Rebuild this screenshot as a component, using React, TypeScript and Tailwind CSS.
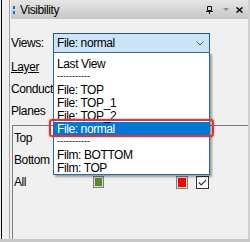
const items = [
  'Last View',
  '-----------',
  'File: TOP',
  'File: TOP_1',
  'File: TOP_2',
  'File: normal',
  '-----------',
  'Film: BOTTOM',
  'Film: TOP',
];

const PinIcon = () => (
  <svg width="7" height="8" viewBox="0 0 7 8" className="block">
    <path d="M1.5 0.5h4v4h-4z M0 5.5h7 M3.5 5.5v2.5" stroke="#111" strokeWidth="1" fill="none" />
  </svg>
);

const CloseIcon = () => (
  <svg width="7" height="6" viewBox="0 0 7 6" className="block">
    <path d="M0.5 0.5l6 5 M6.5 0.5l-6 5" stroke="#111" strokeWidth="1.6" fill="none" />
  </svg>
);

export default function App() {
  return (
    <div className="relative w-[250px] h-[242px] overflow-hidden bg-[#f0f0f0] flex flex-col font-['Liberation_Sans',Arial,sans-serif] text-[11px] text-black">
      <div className="flex flex-1">
        {/* left gutter */}
        <div className="flex w-[11px] shrink-0">
          <div className="w-px" />
          <div className="w-px bg-black" />
          <div className="w-[7px]" />
          <div className="w-px bg-[#a0a0a0]" />
          <div className="w-px" />
        </div>

        {/* panel */}
        <div className="flex flex-1 flex-col">
          <div className="flex h-[19px] items-center bg-gradient-to-b from-[#e6e6e6] to-[#c6c6c6]">
            <div className="ml-[2px] flex flex-col gap-[2px]">
              <div className="h-[3px] w-[2px] bg-[#1f6fd1]" />
              <div className="h-[3px] w-[2px] bg-[#1f6fd1]" />
            </div>
            <span className="ml-[5px] text-[12px] tracking-[-0.4px]">Visibility</span>
            <div className="ml-auto flex items-center">
              <PinIcon />
              <div className="ml-[10px] h-0 w-0 border-x-[3px] border-t-[3px] border-x-transparent border-t-[#8c8c8c]" />
              <div className="ml-[7px] mr-[5px]">
                <CloseIcon />
              </div>
            </div>
          </div>

          <div className="mt-[14px] flex h-[20px] items-center">
            <span className="w-[42px] text-[12px] tracking-[-0.4px]">Views:</span>
            <div className="flex h-[20px] w-[157px] items-center border border-[#1f5a93] bg-[#cce4f7] pl-[3px] pr-[5px] text-[12px] tracking-[-0.4px]">
              <span>File: normal</span>
              <svg width="8" height="5" viewBox="0 0 8 5" className="ml-auto">
                <path d="M0.5 0.5l3.5 3.5 3.5-3.5" stroke="#606060" strokeWidth="1" fill="none" />
              </svg>
            </div>
          </div>

          <div className="mt-[3px] flex flex-col text-[12px] tracking-[-0.4px]">
            <div className="flex h-[22px] items-center">
              <span className="underline">Layer</span>
            </div>
            <div className="flex h-[22px] w-[42px] items-center overflow-hidden whitespace-nowrap">Conductors</div>
            <div className="flex h-[22px] items-center">Planes</div>
          </div>

          <div className="ml-px mt-[3px] flex flex-1 flex-col border-l border-t border-[#7a7a7a] pt-px text-[12px] tracking-[-0.4px]">
            <div className="flex h-[22px] items-center pl-[1px]">Top</div>
            <div className="flex h-[22px] items-center pl-[1px]">Bottom</div>
            <div className="flex h-[22px] items-center pl-[1px]">
              <span className="w-[79px]">All</span>
              <div className="flex h-[12px] w-[11px] items-center justify-center border border-[#808080] bg-[#d8d8d8]">
                <div className="h-[8px] w-[7px] bg-[#5a8a2c]" />
              </div>
              <div className="ml-[72px] flex h-[13px] w-[12px] items-center justify-center border border-[#808080] bg-[#e0e0e0]">
                <div className="h-[9px] w-[8px] bg-[#ff0000]" />
              </div>
              <div className="ml-[8px] flex h-[13px] w-[13px] items-center justify-center border border-[#333] bg-white">
                <svg width="9" height="7" viewBox="0 0 9 7">
                  <path d="M0.8 3.5l2.4 2.4 5-5" stroke="#333" strokeWidth="1.3" fill="none" />
                </svg>
              </div>
            </div>
          </div>
        </div>

        <div className="w-[2px] bg-[#cfcfcf]" />
      </div>
      <div className="h-[3px] bg-[#c8c8c8]" />

      {/* open dropdown list */}
      <div className="absolute left-[53px] top-[52px] w-[157px] border border-[#2b6b9c] bg-white pt-[4px] shadow-[2px_2px_2px_rgba(0,0,0,0.35)] text-[12px] tracking-[-0.4px]">
        {items.map((it, i) => (
          <div
            key={i}
            className={
              it === 'File: normal'
                ? 'flex h-[13px] items-center bg-[#0078d7] pl-[3px] text-white'
                : 'flex h-[13px] items-center pl-[3px]'
            }
          >
            <span className={it.startsWith('-') ? 'text-[9px] tracking-normal' : ''}>{it}</span>
          </div>
        ))}
      </div>

      {/* red annotation outline */}
      <div className="absolute left-[49px] top-[119px] h-[18px] w-[165px] rounded-[3px] border-2 border-[#e5312f] shadow-[0_0_2px_rgba(229,49,47,0.6)]" />
    </div>
  );
}
